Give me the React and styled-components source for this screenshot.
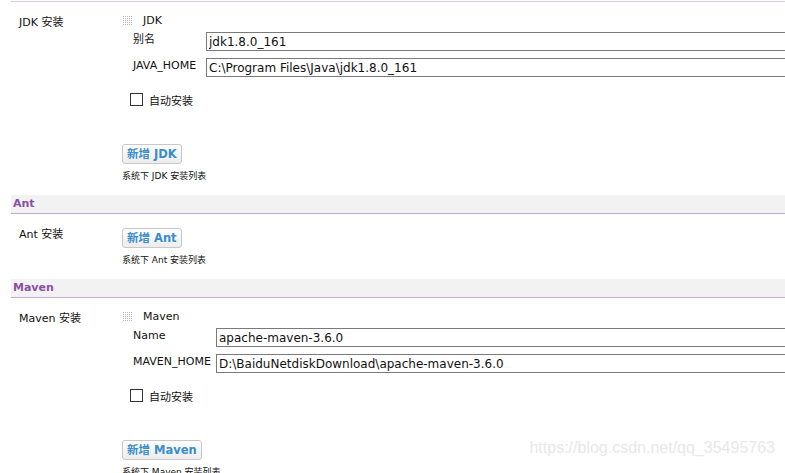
import styled, { createGlobalStyle } from 'styled-components';

const GlobalStyle = createGlobalStyle`
  html, body {
    margin: 0;
    padding: 0;
    background: #fff;
    overflow: hidden;
  }
  body {
    font-family: "DejaVu Sans", Verdana, "Noto Sans CJK SC", sans-serif;
    font-size: 11px;
    color: #111;
  }
`;

const sections = [
  {
    title: null,
    label: 'JDK 安装',
    tool: {
      name: 'JDK',
      labelWidth: 69,
      fields: [
        { label: '别名', value: 'jdk1.8.0_161' },
        { label: 'JAVA_HOME', value: 'C:\\Program Files\\Java\\jdk1.8.0_161' },
      ],
    },
    button: '新增 JDK',
    hint: '系统下 JDK 安装列表',
  },
  {
    title: 'Ant',
    label: 'Ant 安装',
    tool: null,
    button: '新增 Ant',
    hint: '系统下 Ant 安装列表',
  },
  {
    title: 'Maven',
    label: 'Maven 安装',
    tool: {
      name: 'Maven',
      labelWidth: 79,
      fields: [
        { label: 'Name', value: 'apache-maven-3.6.0' },
        { label: 'MAVEN_HOME', value: 'D:\\BaiduNetdiskDownload\\apache-maven-3.6.0' },
      ],
    },
    button: '新增 Maven',
    hint: '系统下 Maven 安装列表',
  },
];

const Handle = () => {
  const dots = [];
  for (let r = 0; r < 5; r++) {
    for (let c = 0; c < 5; c++) {
      dots.push(<rect key={`${r}-${c}`} x={c * 2} y={r * 2} width="1" height="1" fill="#b8b8b8" />);
    }
  }
  return (
    <svg width="10" height="10" viewBox="0 0 10 10">
      {dots}
    </svg>
  );
};

const App = () => {
  return (
    <Page>
      <GlobalStyle />
      <TopRule />
      {sections.map((s) => (
        <div key={s.label}>
          {s.title && <SectionHeader>{s.title}</SectionHeader>}
          <Row>
            <RowLabel>{s.label}</RowLabel>
            <RowContent>
              {s.tool && (
                <>
                  <ToolHeader>
                    <Handle />
                    <span>{s.tool.name}</span>
                  </ToolHeader>
                  <Fields $labelWidth={s.tool.labelWidth}>
                    {s.tool.fields.map((f) => (
                      <FieldRow key={f.label}>
                        <FieldLabel>{f.label}</FieldLabel>
                        <FieldInput defaultValue={f.value} readOnly />
                      </FieldRow>
                    ))}
                  </Fields>
                  <CheckRow>
                    <CheckBox type="checkbox" />
                    <span>自动安装</span>
                  </CheckRow>
                </>
              )}
              <AddButton $spaced={!!s.tool}>{s.button}</AddButton>
              <Hint>{s.hint}</Hint>
            </RowContent>
          </Row>
        </div>
      ))}
      <Watermark>https://blog.csdn.net/qq_35495763</Watermark>
    </Page>
  );
};

export default App;

const Page = styled.div`
  position: relative;
  width: 785px;
  height: 473px;
  padding-left: 11px;
  box-sizing: border-box;
  overflow: hidden;
`;

const TopRule = styled.div`
  margin-top: 1px;
  border-top: 1px solid #dccbe6;
`;

const SectionHeader = styled.div`
  height: 18px;
  line-height: 18px;
  padding-left: 2px;
  background: #f2f2f2;
  border-bottom: 1px solid #c6a6d6;
  color: #8a4ea3;
  font-weight: bold;
  font-size: 11px;
`;

const Row = styled.div`
  display: grid;
  grid-template-columns: 111px 1fr;
  padding-bottom: 13px;
`;

const RowLabel = styled.div`
  padding-left: 8px;
  padding-top: 14px;
  line-height: 14px;
`;

const RowContent = styled.div`
  display: flex;
  flex-direction: column;
  align-items: flex-start;
`;

const ToolHeader = styled.div`
  margin-top: 12px;
  height: 14px;
  line-height: 14px;
  display: flex;
  align-items: center;
  gap: 10px;
  padding-left: 1px;
`;

const Fields = styled.div`
  margin-top: 4px;
  margin-left: 11px;
  width: 720px;
  display: grid;
  grid-template-columns: ${(p) => p.$labelWidth}px 1fr;
  column-gap: 4px;
  row-gap: 7px;
`;

const FieldRow = styled.div`
  display: contents;
`;

const FieldLabel = styled.div`
  padding-top: 1px;
  line-height: 14px;
  white-space: nowrap;
`;

const FieldInput = styled.input`
  box-sizing: border-box;
  height: 19px;
  width: 100%;
  margin: 0;
  padding: 0 2px;
  border: 1px solid #7a7a7a;
  font-family: "DejaVu Sans", Verdana, sans-serif;
  font-size: 12px;
  color: #111;
  outline: none;
`;

const CheckRow = styled.div`
  margin-top: 16px;
  margin-left: 8px;
  display: flex;
  align-items: flex-start;
  gap: 6px;
  line-height: 14px;

  span {
    padding-top: 2px;
  }
`;

const CheckBox = styled.input`
  appearance: none;
  margin: 0;
  width: 13px;
  height: 13px;
  border: 1px solid #333;
  background: #fff;
  box-sizing: border-box;
`;

const AddButton = styled.button`
  margin-top: ${(p) => (p.$spaced ? '35px' : '14px')};
  height: 20px;
  padding: 0 4px;
  border: 1px solid #c8c8c8;
  border-radius: 3px;
  background: linear-gradient(#fdfdfd, #ececec);
  color: #3a8dc9;
  font-family: "DejaVu Sans", Verdana, "Noto Sans CJK SC", sans-serif;
  font-weight: bold;
  font-size: 11.5px;
  line-height: 18px;
  cursor: pointer;
`;

const Hint = styled.div`
  margin-top: 6px;
  font-size: 9px;
  line-height: 12px;
`;

const Watermark = styled.div`
  position: absolute;
  right: 10px;
  bottom: 16px;
  font-family: "Liberation Sans", Arial, sans-serif;
  font-size: 16px;
  color: #e8e8e8;
  pointer-events: none;
`;
